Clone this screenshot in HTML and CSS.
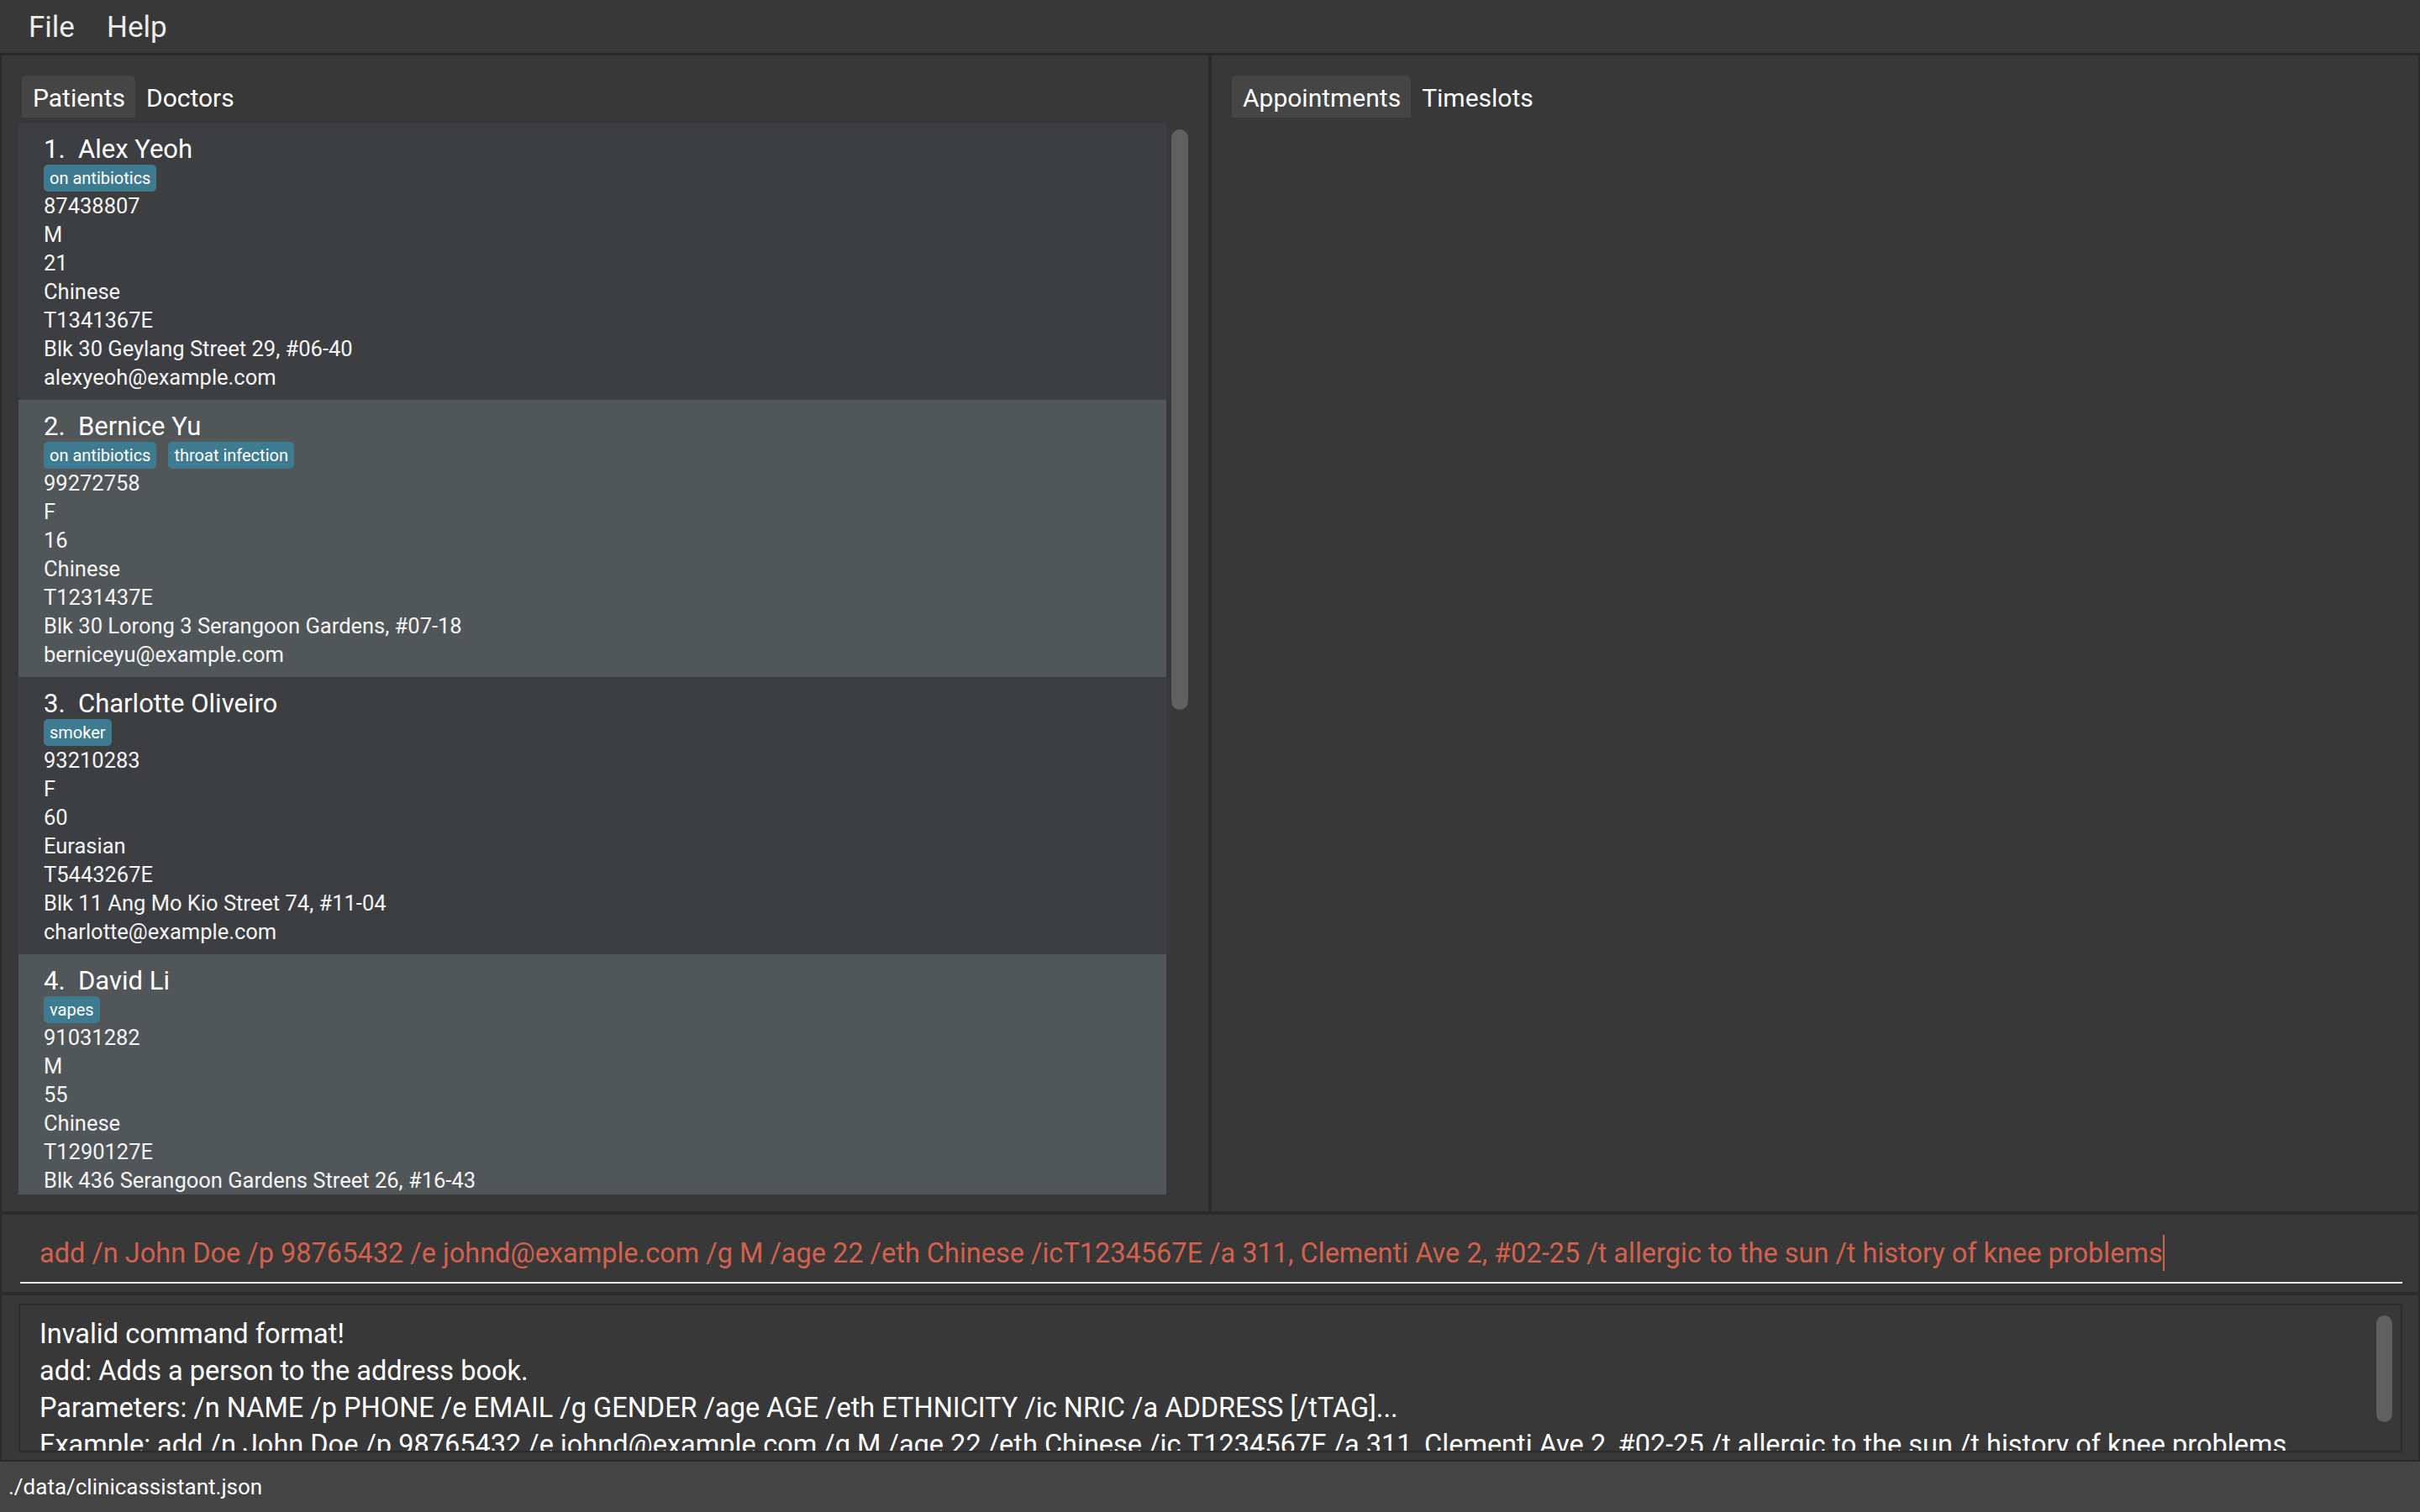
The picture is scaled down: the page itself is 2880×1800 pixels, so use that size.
FILE: index.html
```html
<!DOCTYPE html>
<html lang="en">
<head>
<meta charset="utf-8">
<title>ClinicAssistant</title>
<link rel="stylesheet" href="styles.css">
</head>
<body>
<div class="app">
  <nav class="menubar">
    <span class="menu-item">File</span>
    <span class="menu-item">Help</span>
  </nav>

  <div class="main">
    <section class="pane">
      <div class="tabs">
        <div class="tab active">Patients</div>
        <div class="tab">Doctors</div>
      </div>
      <div class="listwrap">
        <div class="list">
          <div class="card odd">
            <div class="name">1.&nbsp; Alex Yeoh</div>
            <div class="tags"><span class="tag">on antibiotics</span></div>
            <div class="field">87438807</div>
            <div class="field">M</div>
            <div class="field">21</div>
            <div class="field">Chinese</div>
            <div class="field">T1341367E</div>
            <div class="field">Blk 30 Geylang Street 29, #06-40</div>
            <div class="field">alexyeoh@example.com</div>
          </div>
          <div class="card even">
            <div class="name">2.&nbsp; Bernice Yu</div>
            <div class="tags"><span class="tag">on antibiotics</span><span class="tag">throat infection</span></div>
            <div class="field">99272758</div>
            <div class="field">F</div>
            <div class="field">16</div>
            <div class="field">Chinese</div>
            <div class="field">T1231437E</div>
            <div class="field">Blk 30 Lorong 3 Serangoon Gardens, #07-18</div>
            <div class="field">berniceyu@example.com</div>
          </div>
          <div class="card odd">
            <div class="name">3.&nbsp; Charlotte Oliveiro</div>
            <div class="tags"><span class="tag">smoker</span></div>
            <div class="field">93210283</div>
            <div class="field">F</div>
            <div class="field">60</div>
            <div class="field">Eurasian</div>
            <div class="field">T5443267E</div>
            <div class="field">Blk 11 Ang Mo Kio Street 74, #11-04</div>
            <div class="field">charlotte@example.com</div>
          </div>
          <div class="card even">
            <div class="name">4.&nbsp; David Li</div>
            <div class="tags"><span class="tag">vapes</span></div>
            <div class="field">91031282</div>
            <div class="field">M</div>
            <div class="field">55</div>
            <div class="field">Chinese</div>
            <div class="field">T1290127E</div>
            <div class="field">Blk 436 Serangoon Gardens Street 26, #16-43</div>
            <div class="field">lidavid@example.com</div>
          </div>
        </div>
        <div class="vscroll"><div class="thumb list-thumb"></div></div>
      </div>
    </section>

    <section class="pane">
      <div class="tabs">
        <div class="tab active">Appointments</div>
        <div class="tab">Timeslots</div>
      </div>
    </section>
  </div>

  <div class="command">
    <div class="command-field">add /n John Doe /p 98765432 /e johnd@example.com /g M /age 22 /eth Chinese /icT1234567E /a 311, Clementi Ave 2, #02-25 /t allergic to the sun /t history of knee problems<span class="caret"></span></div>
  </div>

  <div class="result">
    <div class="result-box">
      <div class="result-text">
        <div>Invalid command format!</div>
        <div>add: Adds a person to the address book.</div>
        <div>Parameters: /n NAME /p PHONE /e EMAIL /g GENDER /age AGE /eth ETHNICITY /ic NRIC /a ADDRESS [/tTAG]...</div>
        <div>Example: add /n John Doe /p 98765432 /e johnd@example.com /g M /age 22 /eth Chinese /ic T1234567E /a 311, Clementi Ave 2, #02-25 /t allergic to the sun /t history of knee problems</div>
      </div>
      <div class="result-scroll"><div class="thumb result-thumb"></div></div>
    </div>
  </div>

  <footer class="status">./data/clinicassistant.json</footer>
</div>
</body>
</html>
```

FILE: styles.css
```css
* {
  box-sizing: border-box;
}

html, body {
  margin: 0;
  padding: 0;
  background: #2a2a2a;
}

body {
  font-family: Roboto, "Liberation Sans", sans-serif;
  color: #ffffff;
  width: 2880px;
  height: 1800px;
  overflow: hidden;
}

.app {
  display: flex;
  flex-direction: column;
  width: 2880px;
  height: 1800px;
}

/* Menu bar */
.menubar {
  height: 63px;
  margin-bottom: 3px;
  background: #383838;
  display: flex;
  padding: 4px 0 0 15px;
  font-size: 35px;
  line-height: 58px;
  color: #ececec;
}

.menu-item {
  padding: 0 19px;
}

/* Main split */
.main {
  height: 1376px;
  display: flex;
  gap: 4px;
  padding: 0 2px;
}

.pane {
  flex: 1;
  background: #383838;
  padding: 24px 20px 20px 20px;
  display: flex;
  flex-direction: column;
}

.tabs {
  display: flex;
  margin-left: 4px;
  height: 50px;
  margin-bottom: 6px;
}

.tab {
  font-size: 30px;
  line-height: 50px;
  padding: 2px 12px 0 13px;
  height: 50px;
  color: #ffffff;
  border-radius: 6px 6px 0 0;
}

.tab.active {
  background: #454545;
}

.listwrap {
  flex: 1;
  display: flex;
  min-height: 0;
}

.list {
  flex: 1;
  overflow: hidden;
  display: flex;
  flex-direction: column;
}

.card {
  flex: none;
  height: 330px;
  padding: 13px 0 10px 30px;
}

.card.odd {
  background: #3c3e41;
}

.card.even {
  background: #515659;
}

.name {
  font-size: 31px;
  line-height: 37px;
  white-space: nowrap;
}

.tags {
  display: flex;
  gap: 14px;
  height: 32px;
}

.tag {
  background: #3e7a90;
  color: #ffffff;
  font-size: 20px;
  line-height: 32px;
  height: 32px;
  padding: 0 7px;
  border-radius: 5px;
}

.field {
  font-size: 25.5px;
  line-height: 34px;
  white-space: nowrap;
  color: #f4f4f4;
}

.vscroll {
  width: 30px;
  padding: 8px 4px 0 6px;
}

.thumb {
  background: #606060;
  border-radius: 10px;
}

.list-thumb {
  width: 20px;
  height: 691px;
}

/* Command box */
.command {
  height: 92px;
  margin: 4px 2px 0 2px;
  background: #383838;
  padding: 24px 19px 10px 22px;
}

.command-field {
  font-size: 32.5px;
  line-height: 44px;
  padding: 0 0 12px 23px;
  border-bottom: 2px solid #ffffff;
  color: #d4614d;
  white-space: nowrap;
  overflow: hidden;
}

.caret {
  display: inline-block;
  width: 2px;
  height: 43px;
  background: #d4614d;
  vertical-align: -10px;
}

/* Result box */
.result {
  height: 196px;
  margin: 4px 2px 0 2px;
  background: #383838;
  padding: 10px 19px 9px 20px;
}

.result-box {
  height: 177px;
  border: 2px solid #2c2c2c;
  background: #383838;
  display: flex;
  overflow: hidden;
}

.result-text {
  flex: 1;
  font-size: 32.5px;
  line-height: 44px;
  padding: 12px 0 0 23px;
  white-space: nowrap;
  overflow: hidden;
  color: #ffffff;
}

.result-scroll {
  width: 29px;
  padding: 12px 10px 0 0;
}

.result-thumb {
  width: 19px;
  height: 127px;
}

/* Status bar */
.status {
  height: 60px;
  margin-top: 2px;
  background: #444444;
  font-size: 26px;
  line-height: 60px;
  padding-left: 10px;
  color: #ffffff;
}
```
